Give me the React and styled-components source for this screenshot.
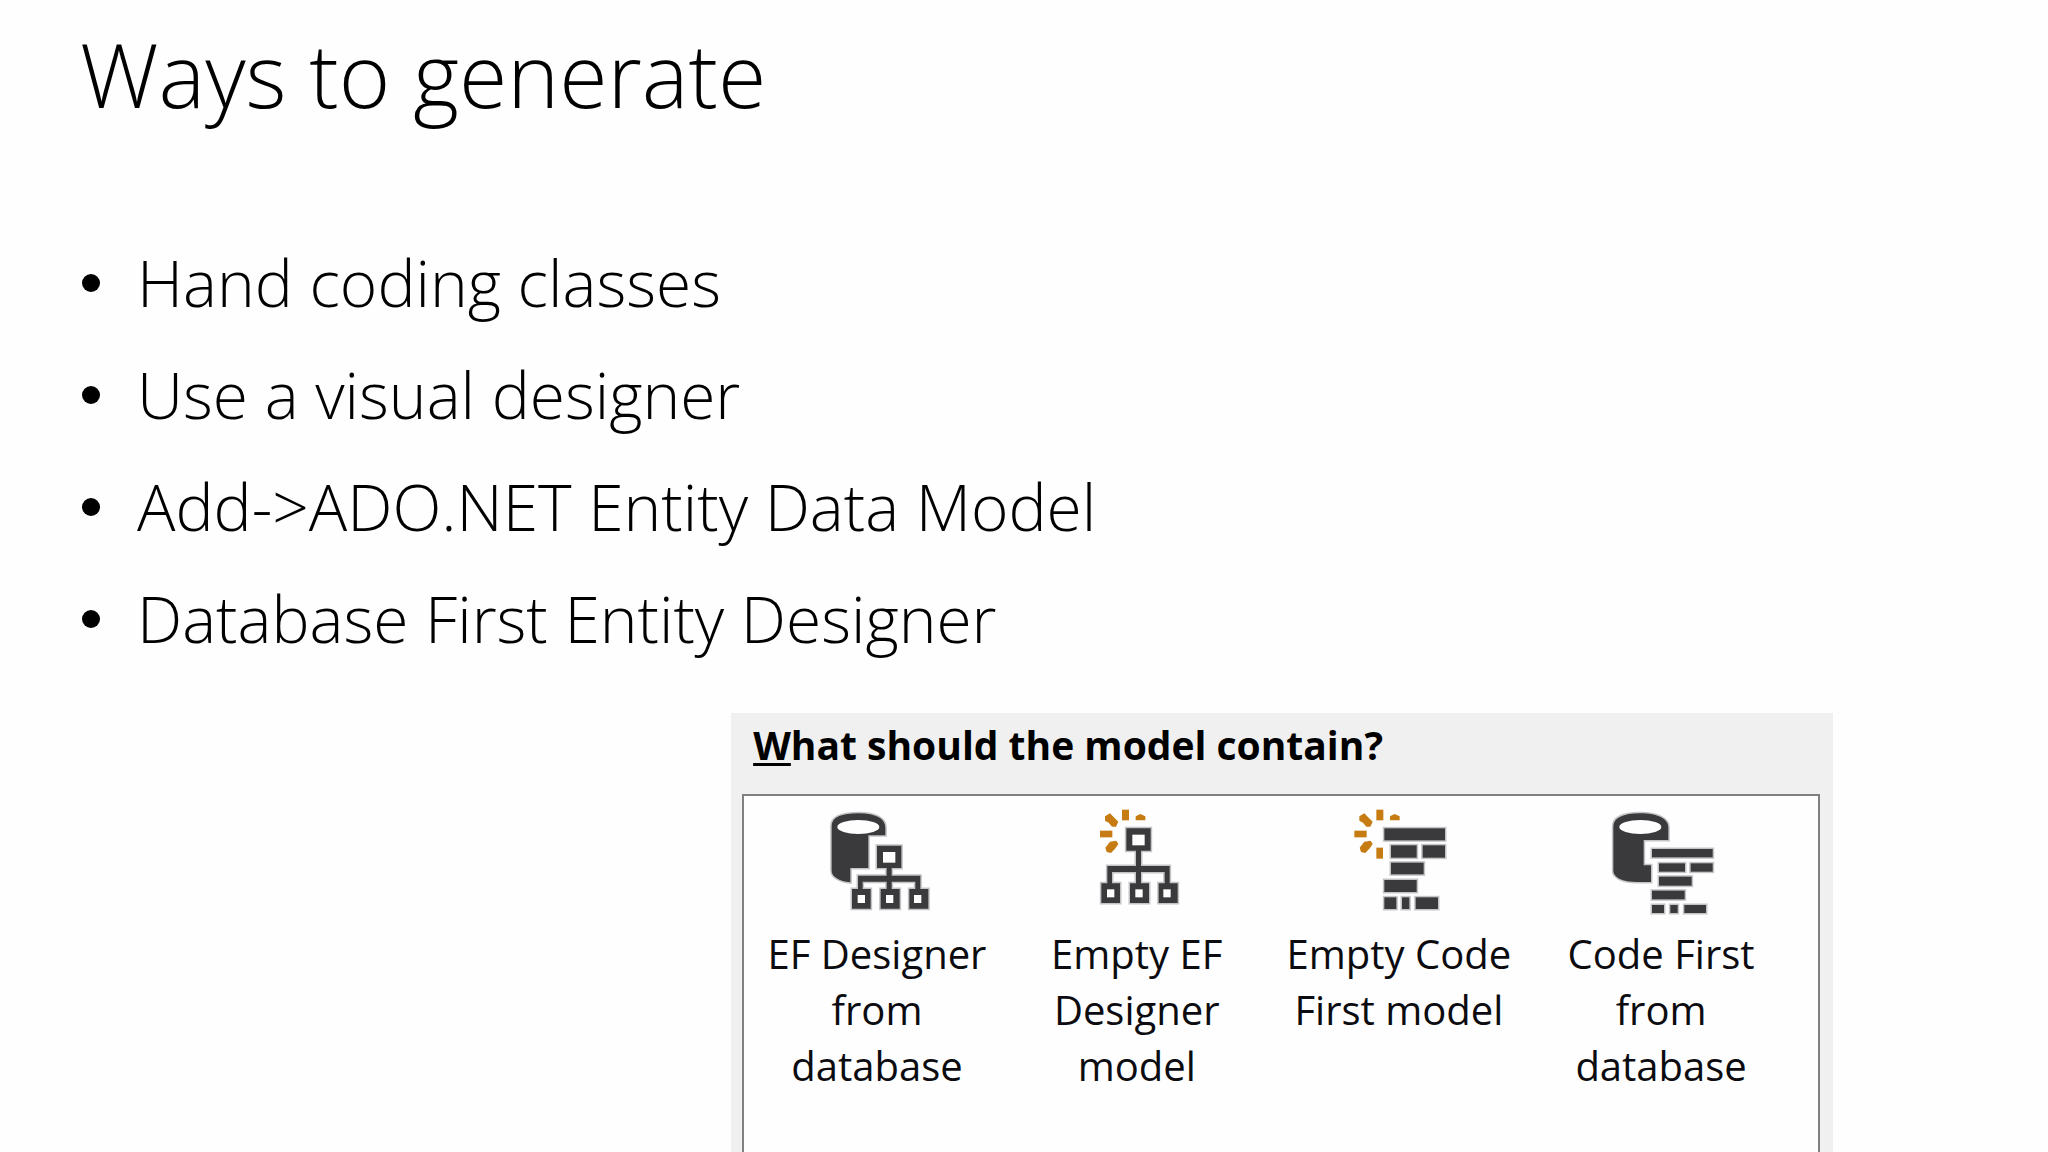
import React from "react";
import styled, { createGlobalStyle } from "styled-components";

const GlobalStyle = createGlobalStyle`
  body {
    margin: 0;
    background-color: #fefefe;
    color: #000;
    font-family: "Open Sans", "Noto Sans", sans-serif;
  }
`;

const Slide = styled.main`
  display: flex;
  flex-direction: column;
  height: 100vh;
  overflow: hidden;
`;

const Title = styled.h1`
  margin: 10px 80px 0;
  font-size: 88px;
  line-height: 128px;
  font-weight: 300;
`;

const Bullets = styled.ul`
  margin: 89px 82px 0;
  padding: 0;
  list-style: none;
`;

const Bullet = styled.li`
  display: flex;
  align-items: center;
  gap: 37px;
  font-size: 64px;
  line-height: 112px;
  font-weight: 300;

  &::before {
    content: "";
    width: 18px;
    height: 18px;
    border-radius: 50%;
    background-color: #000;
  }
`;

const Panel = styled.section`
  flex: 1;
  display: flex;
  flex-direction: column;
  margin: 38px 10.5% 0 35.7%;
  padding: 0 13px 0 11px;
  background-color: #f0f0f1;
`;

const PanelTitle = styled.h2`
  margin: 0;
  padding: 4px 11px 21px;
  font-size: 39px;
  line-height: 56px;
  font-weight: 700;
`;

const AccessKey = styled.span`
  text-decoration: underline;
  text-decoration-thickness: 3px;
  text-underline-offset: 3px;
`;

const Options = styled.div`
  flex: 1;
  display: grid;
  grid-template-columns: repeat(4, 1fr);
  align-items: start;
  padding: 12px 27px 0 3px;
  border: 2px solid #808083;
  border-bottom: none;
  background-color: #fefefe;
`;

const Option = styled.button`
  display: flex;
  flex-direction: column;
  align-items: center;
  gap: 14px;
  padding: 0 20px;
  border: none;
  background: none;
  color: #0c0c10;
  font-family: inherit;
  font-size: 40px;
  line-height: 56px;
  text-align: center;
`;

const OptionText = styled.span`
  white-space: pre;
`;

const Icon = styled.svg`
  width: 112px;
  height: 104px;
  overflow: visible;
  fill: #3a3a3c;
`;

const Blocks = styled.g`
  stroke: #c4c4c7;
  stroke-width: 9px;
  paint-order: stroke;
`;

const Sparks = styled.g`
  fill: #c67c12;
`;

// Three boxes hanging from one parent box
const Tree = ({ x, y, stem, drop }) => {
  const bar = 72 + stem;
  const box = bar + 18 + drop;
  return (
    <g transform={`translate(${x} ${y})`}>
      <Blocks>
        <path
          d={`M79 5h73v67h-29v${stem}h86v${18 + drop}h24v59h-57v-59h18v-${drop}h-71v${drop}h24v59H90v-59h18v-${drop}H36v${drop}h24v59H4v-59h18V${bar}H108V72H79z`}
        />
      </Blocks>
      <g fill="#fefefe">
        <rect x="97" y="24" width="37" height="32" />
        <rect x="21" y={box + 18} width="22" height="24" />
        <rect x="106" y={box + 18} width="22" height="24" />
        <rect x="190" y={box + 18} width="22" height="24" />
      </g>
    </g>
  );
};

const SparkRays = () => (
  <>
    <path d="M78 49l15-9 10 10 15 15-7 15H99L89 68 78 62z" />
    <path d="M129 29h21v32h-21z" />
    <path d="M170 49l14-7 15 7v12h-29z" />
    <path d="M63 92h37v20H63z" />
    <path d="M79 143l14-18 19-3 6 10-8 12-14 15-13-3z" />
  </>
);

const DatabaseTreeIcon = () => (
  <Icon viewBox="33 24 336 312" aria-hidden="true">
    <Blocks>
      <path d="M65 78C65 52 94 40 146 40s80 16 80 42v24h-51v98h-54v43C87 243 65 230 65 212z" />
    </Blocks>
    <ellipse cx="145" cy="81" rx="63" ry="21" fill="#fefefe" />
    <Tree x={122} y={132} stem={23} drop={22} />
  </Icon>
);

const NewTreeIcon = () => (
  <Icon viewBox="6 24 336 312" aria-hidden="true">
    <Sparks>
      <SparkRays />
    </Sparks>
    <Tree x={63} y={80} stem={46} drop={34} />
  </Icon>
);

const NewCodeIcon = () => (
  <Icon viewBox="12 24 336 312" aria-hidden="true">
    <Sparks>
      <g transform="translate(-17 0)">
        <SparkRays />
      </g>
      <rect x="112" y="143" width="20" height="33" />
    </Sparks>
    <Blocks>
      <rect x="136" y="85" width="182" height="36" />
      <rect x="156" y="136" width="77" height="37" />
      <rect x="251" y="136" width="67" height="37" />
      <rect x="156" y="188" width="98" height="35" />
      <rect x="136" y="240" width="97" height="36" />
      <rect x="136" y="292" width="36" height="35" />
      <rect x="189" y="292" width="22" height="35" />
      <rect x="230" y="292" width="67" height="35" />
    </Blocks>
  </Icon>
);

const DatabaseCodeIcon = () => (
  <Icon viewBox="18 24 336 312" aria-hidden="true">
    <Blocks>
      <path d="M43 80C43 54 72 40 124 40s84 16 84 42v38h-74v76h22v50h-40C70 246 43 232 43 212z" />
      <rect x="159" y="147" width="182" height="25" />
      <rect x="180" y="190" width="78" height="25" />
      <rect x="275" y="190" width="66" height="25" />
      <rect x="180" y="230" width="98" height="27" />
      <rect x="159" y="272" width="98" height="26" />
      <rect x="159" y="315" width="36" height="24" />
      <rect x="214" y="315" width="22" height="24" />
      <rect x="256" y="315" width="65" height="24" />
    </Blocks>
    <ellipse cx="124" cy="81" rx="63" ry="21" fill="#fefefe" />
  </Icon>
);

const bullets = [
  "Hand coding classes",
  "Use a visual designer",
  "Add->ADO.NET Entity Data Model",
  "Database First Entity Designer",
];

const options = [
  { icon: DatabaseTreeIcon, lines: ["EF Designer", "from", "database"] },
  { icon: NewTreeIcon, lines: ["Empty EF", "Designer", "model"] },
  { icon: NewCodeIcon, lines: ["Empty Code", "First model"] },
  { icon: DatabaseCodeIcon, lines: ["Code First", "from", "database"] },
];

const App = () => {
  return (
    <>
      <GlobalStyle />
      <Slide>
        <Title>Ways to generate</Title>
        <Bullets>
          {bullets.map((text) => (
            <Bullet key={text}>{text}</Bullet>
          ))}
        </Bullets>
        <Panel>
          <PanelTitle>
            <AccessKey>W</AccessKey>hat should the model contain?
          </PanelTitle>
          <Options>
            {options.map(({ icon: OptionIcon, lines }) => (
              <Option key={lines.join(" ")} type="button">
                <OptionIcon />
                <OptionText>{lines.join("\n")}</OptionText>
              </Option>
            ))}
          </Options>
        </Panel>
      </Slide>
    </>
  );
};

export default App;
